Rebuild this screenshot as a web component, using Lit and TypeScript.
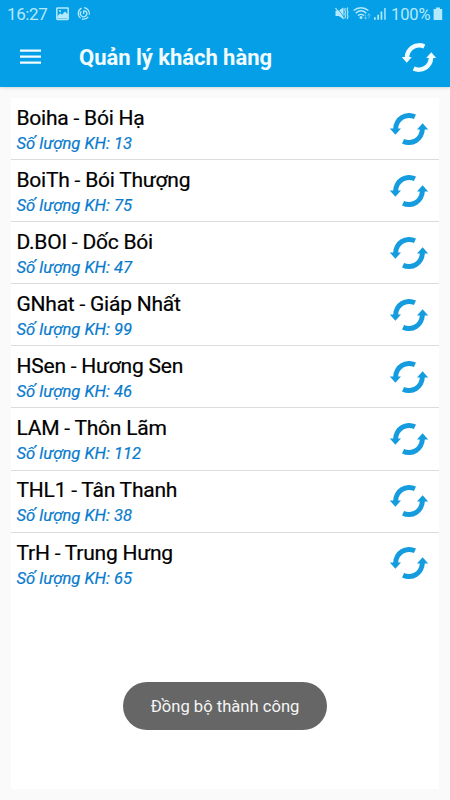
import { LitElement, html, css } from "lit";
import { customElement, property } from "lit/decorators.js";

interface Group {
  name: string;
  count: number;
}

const GROUPS: Group[] = [
  { name: "Boiha - Bói Hạ", count: 13 },
  { name: "BoiTh - Bói Thượng", count: 75 },
  { name: "D.BOI - Dốc Bói", count: 47 },
  { name: "GNhat - Giáp Nhất", count: 99 },
  { name: "HSen - Hương Sen", count: 46 },
  { name: "LAM - Thôn Lãm", count: 112 },
  { name: "THL1 - Tân Thanh", count: 38 },
  { name: "TrH - Trung Hưng", count: 65 },
];

const HALF_SYNC =
  "M7 -14.4 A15.9 15.9 0 0 0 -15.8 -0.5 H-19.2 L-13.6 5.8 L-8 -0.5 H-10.8 A10.9 10.9 0 0 1 4.9 -10 Z";

@customElement("sync-icon")
export class SyncIcon extends LitElement {
  static styles = css`
    :host { display: block; width: 40px; height: 32px; }
    svg { display: block; width: 100%; height: 100%; fill: currentColor; }
  `;
  render() {
    return html`<svg viewBox="-20 -16 40 32">
      <path d=${HALF_SYNC}></path>
      <path d=${HALF_SYNC} transform="rotate(180)"></path>
    </svg>`;
  }
}

@customElement("status-bar")
export class StatusBar extends LitElement {
  static styles = css`
    :host {
      display: flex;
      align-items: center;
      height: 28px;
      padding: 0 7px 0 7px;
      color: #b5e9fc;
      font-size: 17px;
      line-height: 28px;
    }
    .time { width: 49px; letter-spacing: -0.4px; }
    .pct {
      width: 42px;
      letter-spacing: -0.1px;
      margin-left: 3px;
      padding-top: 1px;
      font-size: 16.5px;
    }
    .spacer { flex: 1; }
    svg { display: block; }
  `;
  render() {
    return html`
      <span class="time">16:27</span>
      <svg width="36" height="16" viewBox="0 0 36 16" fill="none" stroke="currentColor">
        <rect x="0.8" y="2" width="11.4" height="11.4" rx="0.6" stroke-width="1.5"/>
        <path d="M1.5 12.5 V9.9 L4.2 7.3 L6 8.7 L9 5.5 L12 8.5 V12.5 Z" fill="currentColor" stroke="none"/>
        <circle cx="4" cy="4.9" r="1" fill="currentColor" stroke="none"/>
        <g stroke-width="1.3">
          <path d="M25.6 2.2 A5.9 5.9 0 0 0 24.5 12.1 M28 1.6 A5.9 5.9 0 0 1 33.2 8.8 M32.2 10.8 A5.9 5.9 0 0 1 25.8 12.9"/>
          <path d="M25.2 5.4 A3.2 3.2 0 1 0 29.8 5.2 L27.4 4.9 M27.6 4.8 V8"/>
        </g>
      </svg>
      <span class="spacer"></span>
      <svg width="53" height="16" viewBox="0 0 53 16" fill="currentColor">
        <path d="M0.5 4.8 H3.4 L8.5 1.4 V12.8 L3.6 10 H0.5 Z"/>
        <path d="M1.8 1.2 L9.2 11.5" stroke="#059fe7" stroke-width="0.8"/>
        <path d="M0.5 2 L8.5 13" stroke="currentColor" stroke-width="1.2"/>
        <path d="M10.3 2 L9.7 4 L10.6 6 L9.7 8 L10.6 10 L9.8 12.5 M12.7 1.5 L12.1 4 L13 6 L12.1 8 L13 10 L12.2 13" fill="none" stroke="currentColor" stroke-width="1.1"/>
        <g fill="none" stroke="currentColor" stroke-width="1.4">
          <path d="M18.6 4.5 C23 0.8 29 0.8 33.4 4.5"/>
          <path d="M20.8 7.1 C24 4.3 28 4.3 31.2 7.1"/>
          <path d="M23 9.6 C25 8 27 8 29 9.6"/>
        </g>
        <circle cx="26" cy="11.6" r="1.5"/>
        <g fill="none" stroke="currentColor" opacity="0.5">
          <path d="M30.6 8.5 V13 M29 11.5 L30.6 13 L32.2 11.5 M34 12.5 V7.8 M32.4 9.4 L34 7.8 L35.6 9.4"/>
        </g>
        <path d="M39 11.2 h1.7 v2.6 h-1.7 Z M42.3 8.7 h1.7 v5.1 h-1.7 Z M45.6 5.4 h1.7 v8.4 h-1.7 Z"/>
        <path d="M49.1 2 h1.7 v11.8 h-1.7 Z" opacity="0.85"/>
      </svg>
      <span class="pct">100%</span>
      <svg width="10" height="16" viewBox="0 0 10 16" fill="currentColor">
        <path d="M3 1.4 h4 v1.6 h2.2 v11 h-8.6 v-11 H3 Z"/>
      </svg>
    `;
  }
}

@customElement("group-row")
export class GroupRow extends LitElement {
  @property({ attribute: false }) group!: Group;

  static styles = css`
    :host {
      display: flex;
      align-items: center;
      box-sizing: border-box;
      height: 62.1px;
      padding: 0 10px 0 5.5px;
      border-bottom: 1px solid #dcdcdc;
    }
    :host(:last-child) { border-bottom-color: transparent; }
    .text { flex: 1; padding-top: 3.6px; }
    .name {
      font-size: 21px;
      line-height: 26px;
      letter-spacing: -0.23px;
      color: #000;
      -webkit-text-stroke: 0.2px #000;
    }
    .count {
      font-size: 16.6px;
      line-height: 25px;
      font-style: italic;
      color: #087bcd;
      -webkit-text-stroke: 0.2px #087bcd;
    }
    sync-icon { color: #159cde; }
  `;
  render() {
    return html`
      <div class="text">
        <div class="name">${this.group.name}</div>
        <div class="count">Số lượng KH: ${this.group.count}</div>
      </div>
      <sync-icon></sync-icon>
    `;
  }
}

@customElement("app-root")
export class AppRoot extends LitElement {
  static styles = css`
    :host {
      display: flex;
      flex-direction: column;
      position: relative;
      height: 800px;
      background: #fafafa;
      font-family: Roboto, "Noto Sans", sans-serif;
      overflow: hidden;
    }
    .header {
      height: 87px;
      background: #059fe7;
      box-shadow: 0 1px 3px rgba(0, 0, 0, 0.15);
    }
    .bar {
      display: flex;
      align-items: center;
      height: 58px;
      padding: 0 13px 0 20px;
      color: #f0fcff;
    }
    .menu { display: block; width: 59px; height: 20px; }
    .title {
      flex: 1;
      font-size: 22px;
      line-height: 30px;
      font-weight: 700;
      letter-spacing: -0.03px;
      padding-top: 1px;
    }
    .bar sync-icon { width: 36px; height: 29px; }
    .list {
      flex: 1;
      margin: 11px 11px 11px;
      background: #fff;
    }
    .toast {
      position: absolute;
      left: 123px;
      top: 682px;
      width: 204px;
      height: 48px;
      border-radius: 24px;
      background: #666;
      color: #f5f5f5;
      font-size: 16.6px;
      line-height: 49px;
      text-align: center;
      white-space: nowrap;
    }
  `;
  render() {
    return html`
      <div class="header">
        <status-bar></status-bar>
        <div class="bar">
          <svg class="menu" viewBox="0 0 59 20" fill="none" stroke="currentColor" stroke-width="2.2">
            <path d="M0 3.6 H21 M0 9.6 H21 M0 15.6 H21"/>
          </svg>
          <div class="title">Quản lý khách hàng</div>
          <sync-icon></sync-icon>
        </div>
      </div>
      <div class="list">
        ${GROUPS.map((g) => html`<group-row .group=${g}></group-row>`)}
      </div>
      <div class="toast">Đồng bộ thành công</div>
    `;
  }
}
